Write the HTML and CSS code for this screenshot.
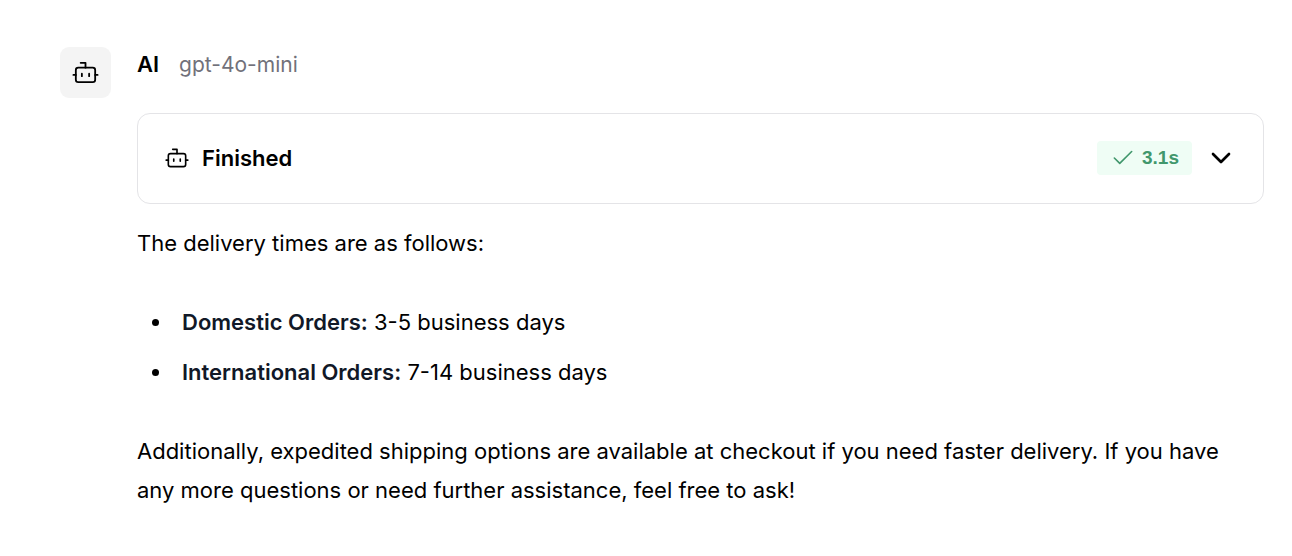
FILE: index.html
```html
<!DOCTYPE html>
<html lang="en">
<head>
<meta charset="utf-8">
<title>AI chat message</title>
<link rel="stylesheet" href="styles.css">
</head>
<body>
<article class="message">
  <div class="avatar">
    <svg class="avatar-icon" viewBox="0 0 24 24" aria-hidden="true"><path d="M12 8V4H8"/><rect width="16" height="12" x="4" y="8" rx="2"/><path d="M2 14h2M20 14h2M15 13v2M9 13v2"/></svg>
  </div>
  <div class="content">
    <header class="sender"><span class="name">AI</span><span class="model">gpt-4o-mini</span></header>
    <button class="status" type="button" aria-expanded="false">
      <svg class="status-icon" viewBox="0 0 24 24" aria-hidden="true"><path d="M12 8V4H8"/><rect width="16" height="12" x="4" y="8" rx="2"/><path d="M2 14h2M20 14h2M15 13v2M9 13v2"/></svg>
      <span class="status-label">Finished</span>
      <span class="duration"><svg class="check" viewBox="0 0 24 24" aria-hidden="true"><path d="M20 6 9 17l-5-5"/></svg>3.1s</span>
      <svg class="chevron" viewBox="0 0 24 24" aria-hidden="true"><path d="m6 9 6 6 6-6"/></svg>
    </button>
    <div class="prose">
      <p>The delivery times are as follows:</p>
      <ul>
        <li><strong>Domestic Orders:</strong> 3-5 business days</li>
        <li><strong>International Orders:</strong> 7-14 business days</li>
      </ul>
      <p>Additionally, expedited shipping options are available at checkout if you need faster delivery. If you have any more questions or need further assistance, feel free to ask!</p>
    </div>
  </div>
</article>
</body>
</html>
```
FILE: styles.css
```css
* { box-sizing: border-box; }
body { margin: 0; background: #fff; color: #000; font-family: Inter, sans-serif; }
svg { flex: none; fill: none; stroke: currentColor; stroke-width: 1.5; stroke-linecap: round; stroke-linejoin: round; }
.message { display: flex; gap: 26px; padding: 47px 28px 28px 60px; }
.avatar { display: flex; align-items: center; justify-content: center; flex: none; width: 51px; height: 51px; border-radius: 9px; background: #f4f4f4; }
.avatar-icon { width: 29px; height: 29px; }
.content { flex: 1; min-width: 0; }
.sender { display: flex; align-items: baseline; gap: 20px; height: 34px; line-height: 34px; }
.name { font-size: 22px; font-weight: 600; }
.model { font-size: 21px; color: #71717a; }
.status { display: flex; align-items: center; width: 100%; margin-top: 32px; padding: 27px 28px 28px 26px; border: 1px solid #e4e4e7; border-radius: 13px; background: #fff; color: inherit; font-family: inherit; }
.status-icon { width: 26px; height: 26px; }
.status-label { margin-left: 12px; font-size: 22px; font-weight: 600; line-height: 28px; }
.duration { display: flex; align-items: center; gap: 6px; height: 34px; margin-left: auto; padding: 0 13px; border-radius: 4px; background: #effdf5; color: #41976c; font-family: "Liberation Sans", sans-serif; font-size: 19px; font-weight: 700; }
.check { width: 26px; height: 26px; }
.chevron { width: 32px; height: 32px; margin-left: 13px; margin-right: -2px; stroke-width: 2; }
.prose { margin-top: 20px; padding-right: 16px; font-size: 22px; line-height: 39px; }
.prose p { margin: 0; }
.prose ul { margin: 40px 0; padding-left: 36px; }
.prose li { padding-left: 9px; }
.prose li + li { margin-top: 11px; }
.prose strong { font-weight: 600; color: #111827; }
```
